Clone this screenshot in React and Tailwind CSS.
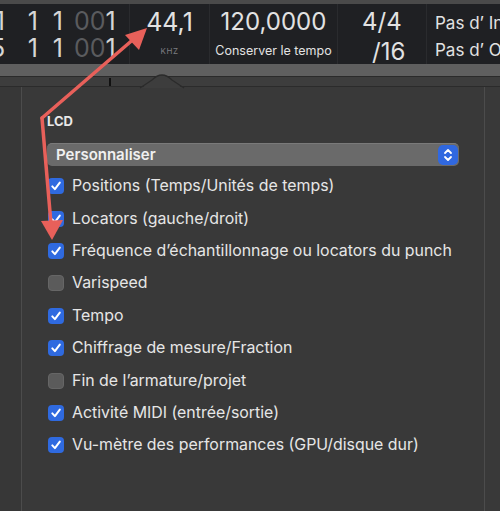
import React from "react";

const items = [
  ["Positions (Temps/Unités de temps)", true],
  ["Locators (gauche/droit)", true],
  ["Fréquence d’échantillonnage ou locators du punch", true],
  ["Varispeed", false],
  ["Tempo", true],
  ["Chiffrage de mesure/Fraction", true],
  ["Fin de l’armature/projet", false],
  ["Activité MIDI (entrée/sortie)", true],
  ["Vu-mètre des performances (GPU/disque dur)", true],
];

function Check({ on }) {
  if (!on)
    return (
      <div className="w-[16px] h-[16px] shrink-0 rounded-[4px] bg-[#5b5b5b] border border-[#666]" />
    );
  return (
    <div className="w-[16px] h-[16px] shrink-0 rounded-[4px] bg-[#2f6ae0] flex items-center justify-center">
      <svg width="12" height="12" viewBox="0 0 12 12">
        <path d="M2.3 6.4 L4.9 9.1 L9.8 2.6" fill="none" stroke="white" strokeWidth="2" strokeLinecap="round" strokeLinejoin="round" />
      </svg>
    </div>
  );
}

function DigitRow({ first }) {
  return (
    <div className="flex items-center h-[27px] text-[25px] leading-[26px] text-[#d6d6d6] -ml-[10px]">
      <span className="w-[15px] text-right">{first}</span>
      <span className="w-[33px] text-right">1</span>
      <span className="w-[25px] text-right">1</span>
      <span className="ml-[11px] text-[#5a5b5e]">00</span>
      <span>1</span>
    </div>
  );
}

export default function App() {
  return (
    <div
      className="w-[500px] h-[511px] bg-[#393939] overflow-hidden relative flex flex-col"
      style={{ fontFamily: "Inter, 'Noto Sans', 'Liberation Sans', sans-serif" }}
    >
      <div className="h-[4px] bg-[#4a4a4a]" />
      {/* LCD */}
      <div className="h-[60px] bg-[#1f2023] flex overflow-hidden">
        <div className="w-[130px] shrink-0 flex flex-col justify-center border-r border-[#2a2b2e] pt-[1px]">
          <DigitRow first="1" />
          <DigitRow first="5" />
        </div>
        <div className="w-[80px] shrink-0 flex flex-col items-center pt-[3px] border-r border-[#2a2b2e]">
          <div className="text-[25px] leading-[30px] text-[#e2e2e2]">44,1</div>
          <div className="text-[8px] leading-[10px] mt-[9px] text-[#7d7e82] tracking-[0.5px]">KHZ</div>
        </div>
        <div className="w-[128px] shrink-0 flex flex-col items-center pt-[3px] border-r border-[#2a2b2e]">
          <div className="text-[24px] leading-[30px] text-[#e2e2e2]">120,0000</div>
          <div className="text-[12.5px] leading-[14px] mt-[7px] text-[#e2e2e2] whitespace-nowrap">Conserver le tempo</div>
        </div>
        <div className="w-[89px] shrink-0 flex flex-col pt-[3px] border-r border-[#2a2b2e]">
          <div className="text-[24px] leading-[30px] text-[#e2e2e2] pl-[24px]">4/4</div>
          <div className="text-[24px] leading-[25px] text-[#e2e2e2] pl-[34px] mt-[2px]">/16</div>
        </div>
        <div className="flex-1 min-w-0 flex flex-col pl-[8px] pt-[8px] whitespace-nowrap">
          <div className="text-[17px] leading-[22px] text-[#e2e2e2]">Pas d’ In</div>
          <div className="text-[17px] leading-[22px] text-[#e2e2e2] mt-[5px]">Pas d’ Ou</div>
        </div>
      </div>
      {/* grey band */}
      <div className="h-[13px] bg-[#5f5f5f] border-b border-[#2a2a2a]" />
      {/* toolbar row */}
      <div className="h-[10px] bg-[#3d3d3d] border-b border-[#2b2b2b] relative">
        <div className="absolute left-[109px] top-[1px] w-[2px] h-[8px] bg-[#111]" />
      </div>
      {/* body */}
      <div className="flex-1 flex">
        <div className="w-[22px] border-r border-[#4c4c4c] bg-[#373737]" />
        <div className="flex-1 bg-[#393939] pl-[25px] pr-[25px] pt-[26px]">
          <div className="text-[13px] leading-[16px] font-bold text-[#e8e8e8]">LCD</div>
          <div className="mt-[14px] h-[23px] rounded-[5px] bg-[#6a6a6a] border-t border-[#7a7a7a] flex items-center justify-between pl-[9px] pr-[1px]">
            <span className="text-[15px] font-semibold text-[#f0f0f0]">Personnaliser</span>
            <div className="w-[20px] h-[20px] rounded-[5px] bg-[#3068e0] flex items-center justify-center">
              <svg width="12" height="16" viewBox="0 0 12 16">
                <path d="M3 6 L6 3 L9 6" fill="none" stroke="white" strokeWidth="1.8" strokeLinecap="round" strokeLinejoin="round" />
                <path d="M3 10 L6 13 L9 10" fill="none" stroke="white" strokeWidth="1.8" strokeLinecap="round" strokeLinejoin="round" />
              </svg>
            </div>
          </div>
          <div className="mt-[4px] flex flex-col">
            {items.map(([t, on]) => (
              <div key={t} className="h-[32.4px] flex items-center gap-[8px] pl-[1px]">
                <Check on={on} />
                <span className="text-[15.9px] text-[#e6e6e6] whitespace-nowrap">{t}</span>
              </div>
            ))}
          </div>
        </div>
        <div className="w-[16px] border-l border-[#4c4c4c] bg-[#393939]" />
      </div>
      {/* popover arrow + annotation arrows */}
      <svg className="absolute left-0 top-0 pointer-events-none" width="500" height="511" viewBox="0 0 500 511">
        <path d="M142 88 L152 80 Q162 70 172 80 L182 88 Z" fill="#3d3d3d" />
        <path d="M140 88 L152 80 Q162 70 172 80 L184 88" fill="none" stroke="#2b2b2b" strokeWidth="1.2" />
        <g stroke="#e8605a" strokeWidth="3.5" strokeLinecap="round" fill="none">
          <line x1="42" y1="118" x2="136" y2="37" />
          <line x1="42" y1="118" x2="51" y2="224" />
        </g>
        <polygon points="147,28 125,35 139,50" fill="#e8605a" />
        <polygon points="52,240 41,221 63,220" fill="#e8605a" />
      </svg>
    </div>
  );
}
